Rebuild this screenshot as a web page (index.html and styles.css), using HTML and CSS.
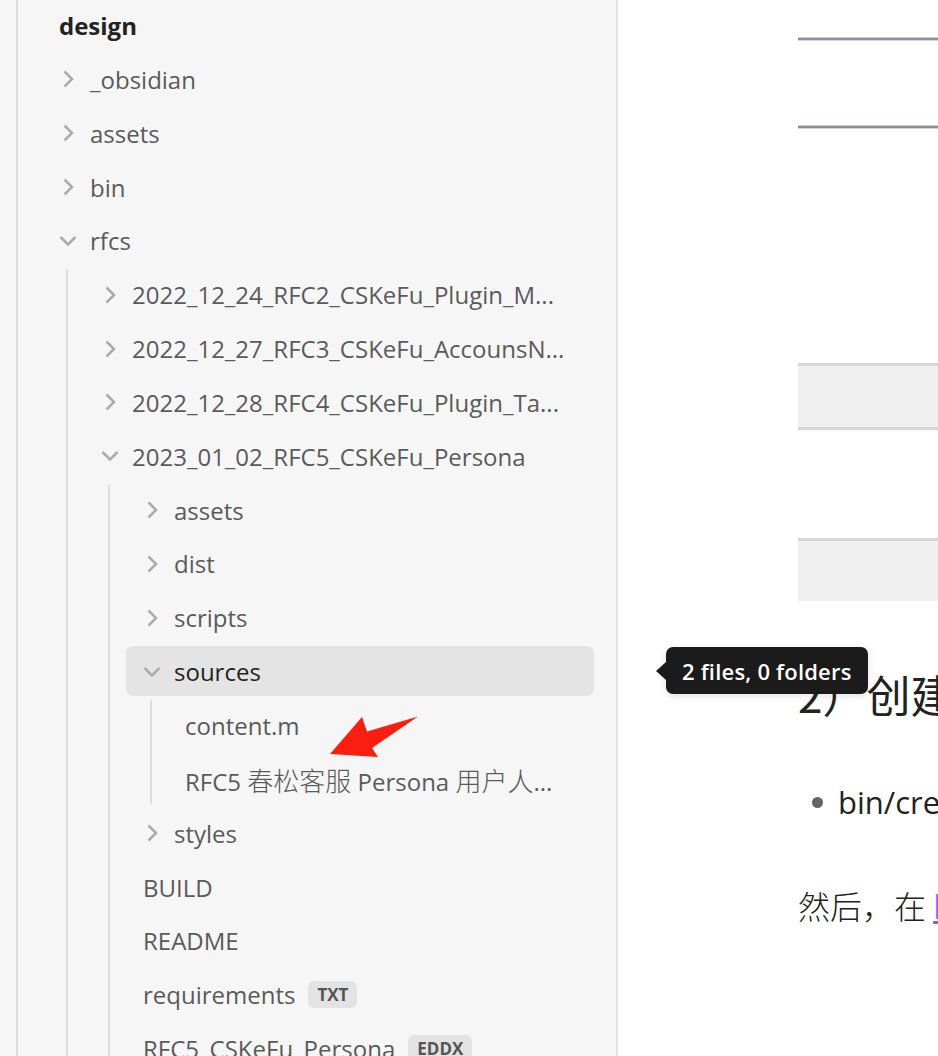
FILE: index.html
```html
<!DOCTYPE html>
<html lang="zh-CN">
<head>
<meta charset="utf-8">
<title>design</title>
<link rel="stylesheet" href="styles.css">
</head>
<body>
<div class="app">
  <aside class="sidebar">
    <div class="c1">
      <div class="row root"><span class="name">design</span></div>
      <div class="row folder l1"><svg class="chev" viewBox="0 0 18 18"><polyline points="5.5,1.5 13,9 5.5,16.5"/></svg><span class="name">_obsidian</span></div>
      <div class="row folder l1"><svg class="chev" viewBox="0 0 18 18"><polyline points="5.5,1.5 13,9 5.5,16.5"/></svg><span class="name">assets</span></div>
      <div class="row folder l1"><svg class="chev" viewBox="0 0 18 18"><polyline points="5.5,1.5 13,9 5.5,16.5"/></svg><span class="name">bin</span></div>
      <div class="row folder l1"><svg class="chev" viewBox="0 0 18 18"><polyline points="1.5,5 9,12.5 16.5,5"/></svg><span class="name">rfcs</span></div>
      <div class="c2">
        <div class="row folder"><svg class="chev" viewBox="0 0 18 18"><polyline points="5.5,1.5 13,9 5.5,16.5"/></svg><span class="name">2022_12_24_RFC2_CSKeFu_Plugin_M...</span></div>
        <div class="row folder"><svg class="chev" viewBox="0 0 18 18"><polyline points="5.5,1.5 13,9 5.5,16.5"/></svg><span class="name">2022_12_27_RFC3_CSKeFu_AccounsN...</span></div>
        <div class="row folder"><svg class="chev" viewBox="0 0 18 18"><polyline points="5.5,1.5 13,9 5.5,16.5"/></svg><span class="name">2022_12_28_RFC4_CSKeFu_Plugin_Ta...</span></div>
        <div class="row folder"><svg class="chev" viewBox="0 0 18 18"><polyline points="1.5,5 9,12.5 16.5,5"/></svg><span class="name">2023_01_02_RFC5_CSKeFu_Persona</span></div>
        <div class="c3">
          <div class="row folder"><svg class="chev" viewBox="0 0 18 18"><polyline points="5.5,1.5 13,9 5.5,16.5"/></svg><span class="name">assets</span></div>
          <div class="row folder"><svg class="chev" viewBox="0 0 18 18"><polyline points="5.5,1.5 13,9 5.5,16.5"/></svg><span class="name">dist</span></div>
          <div class="row folder"><svg class="chev" viewBox="0 0 18 18"><polyline points="5.5,1.5 13,9 5.5,16.5"/></svg><span class="name">scripts</span></div>
          <div class="row folder selected"><svg class="chev" viewBox="0 0 18 18"><polyline points="1.5,5 9,12.5 16.5,5"/></svg><span class="name">sources</span></div>
          <div class="c4">
            <div class="row file"><span class="name">content.m</span></div>
            <div class="row file"><span class="name">RFC5 <span class="cjk">春松客服</span> Persona <span class="cjk">用户人</span>...</span></div>
          </div>
          <div class="row folder"><svg class="chev" viewBox="0 0 18 18"><polyline points="5.5,1.5 13,9 5.5,16.5"/></svg><span class="name">styles</span></div>
          <div class="row file"><span class="name">BUILD</span></div>
          <div class="row file"><span class="name">README</span></div>
          <div class="row file"><span class="name">requirements</span><span class="tag">TXT</span></div>
          <div class="row file"><span class="name">RFC5_CSKeFu_Persona</span><span class="tag">EDDX</span></div>
        </div>
      </div>
    </div>
  </aside>
  <main class="main">
    <div class="doc">
      <div class="rule"></div>
      <div class="rule second"></div>
      <div class="block closed"></div>
      <div class="block open"></div>
      <h2 class="heading">2）创建插件项目</h2>
      <ul class="list">
        <li>bin/create_plugin.sh</li>
      </ul>
      <p class="para">然后，在 <a class="link">bin</a> 目录下</p>
    </div>
  </main>
  <div class="tooltip">2 files, 0 folders</div>
  <svg class="annot" viewBox="0 0 100 50" width="100" height="50">
    <polygon points="4,42 36,5 41,19.5 92,4.5 46,36 52,45" />
  </svg>
</div>
</body>
</html>
```

FILE: styles.css
```css
* { box-sizing: border-box; }

html, body {
  margin: 0;
  padding: 0;
  height: 100%;
  overflow: hidden;
}

body {
  font-family: "Open Sans", "Noto Sans CJK SC", sans-serif;
  background: #ffffff;
}

.app {
  position: relative;
  display: flex;
  width: 938px;
  height: 1056px;
}

/* ---------- sidebar ---------- */
.sidebar {
  width: 618px;
  flex-shrink: 0;
  height: 100%;
  background: #f6f6f6;
  border-right: 2px solid #e3e3e3;
  padding-right: 22px;
  overflow: hidden;
}

.c1 {
  margin-left: 16px;
  border-left: 2px solid #dcdcdc;
  min-height: 100%;
}

.c2 {
  margin-left: 48px;
  border-left: 2px solid #dcdcdc;
}

.c3 {
  margin-left: 40px;
  border-left: 2px solid #dcdcdc;
}

.c4 {
  margin-left: 40px;
  border-left: 2px solid #dcdcdc;
}

.row {
  display: flex;
  align-items: center;
  height: 50px;
  margin: 0 0 3.85px 16px;
  padding-left: 17px;
  padding-top: 1px;
  border-radius: 7px;
  font-size: 24px;
  color: #5a5a5a;
  white-space: nowrap;
  overflow: hidden;
}

.row.root,
.row.l1 {
  padding-left: 25px;
}

.row.root {
  color: #222222;
  font-weight: 700;
}

.row.selected {
  background: #e4e4e4;
  color: #222222;
}

.chev {
  width: 18px;
  height: 18px;
  flex-shrink: 0;
  margin-right: 13px;
  fill: none;
  stroke: #ababab;
  stroke-width: 2.5;
  stroke-linecap: butt;
  stroke-linejoin: miter;
}

.name {
  overflow: hidden;
  white-space: nowrap;
}

.cjk {
  font-family: "Noto Sans CJK SC", sans-serif;
  font-size: 26px;
  font-weight: 300;
}

.tag {
  margin-left: 13px;
  padding: 0 9px;
  height: 27px;
  line-height: 27px;
  border-radius: 6px;
  background: #e3e3e3;
  color: #555555;
  font-size: 17px;
  font-weight: 700;
}

/* ---------- main pane ---------- */
.main {
  flex: 1;
  height: 100%;
  overflow: hidden;
  background: #ffffff;
}

.doc {
  width: 900px;
  padding: 37px 0 0 180px;
  color: #222222;
}

.rule {
  height: 4px;
  background: #8b9199;
  border-top: 1px solid #c9cdd2;
  border-bottom: 1px solid #d3d6d9;
}

.rule.second {
  margin-top: 84px;
}

.block {
  background: #f0f0f0;
  border-top: 3px solid #d5d7da;
}

.block.closed {
  margin-top: 234px;
  height: 67px;
  border-bottom: 3px solid #d5d7da;
}

.block.open {
  margin-top: 108px;
  height: 63px;
}

.heading {
  margin: 63px 0 0;
  height: 60px;
  line-height: 60px;
  font-family: "Noto Sans CJK SC", "Open Sans", sans-serif;
  font-size: 44px;
  font-weight: 400;
  color: #222222;
  white-space: nowrap;
}

.list {
  margin: 54px 0 0;
  padding: 0 0 0 40px;
  list-style: none;
}

.list li {
  position: relative;
  height: 48px;
  line-height: 48px;
  font-size: 31px;
  white-space: nowrap;
  color: #222222;
}

.list li::before {
  content: "";
  position: absolute;
  left: -26px;
  top: 19px;
  width: 11px;
  height: 11px;
  border-radius: 50%;
  background: #666666;
}

.para {
  margin: 55px 0 0;
  height: 48px;
  line-height: 48px;
  font-family: "Noto Sans CJK SC", "Open Sans", sans-serif;
  font-size: 32px;
  font-weight: 300;
  color: #222222;
  white-space: nowrap;
}

.link {
  color: #8a5cf5;
  text-decoration: underline;
}

/* ---------- overlays ---------- */
.tooltip {
  position: absolute;
  left: 666px;
  top: 647px;
  height: 47px;
  padding: 0 16px;
  display: flex;
  align-items: center;
  background: #1b1b1b;
  color: #ffffff;
  border-radius: 7px;
  font-size: 22px;
  font-weight: 600;
  letter-spacing: 0.2px;
  white-space: nowrap;
  box-shadow: 0 2px 8px rgba(0, 0, 0, 0.12);
}

.tooltip::before {
  content: "";
  position: absolute;
  left: -10px;
  top: 50%;
  margin-top: -9px;
  border-top: 9px solid transparent;
  border-bottom: 9px solid transparent;
  border-right: 10px solid #1b1b1b;
}

.annot {
  position: absolute;
  left: 326px;
  top: 712px;
  fill: #fa1e10;
}
```
